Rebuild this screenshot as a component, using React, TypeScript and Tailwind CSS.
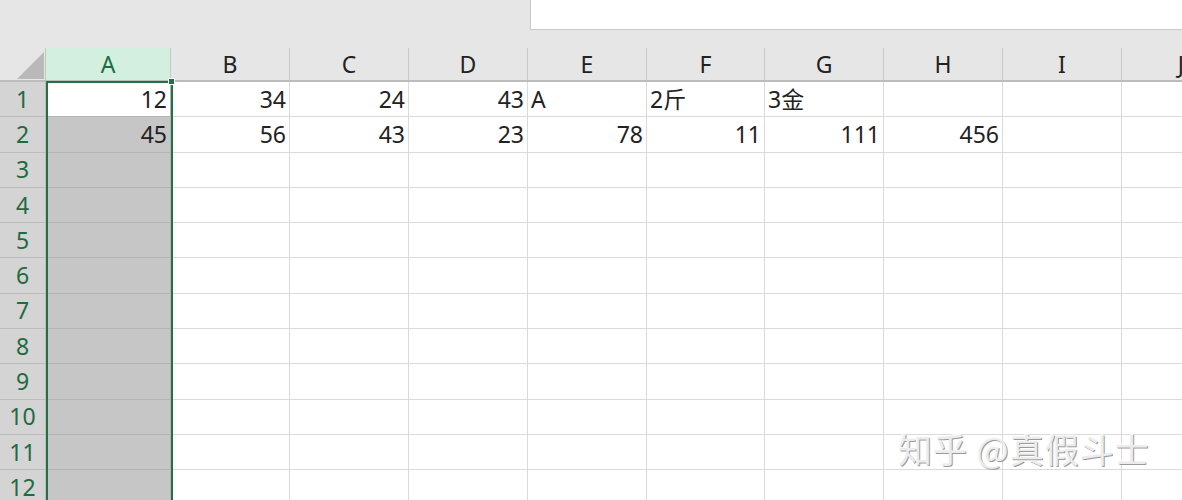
import React from "react";

const cols = ["A", "B", "C", "D", "E", "F", "G", "H", "I", "J"];
const widths = ["w-[125px]", "w-[119px]", "w-[119px]", "w-[119px]", "w-[119px]", "w-[118px]", "w-[119px]", "w-[119px]", "w-[119px]", "w-[119px]"];

type Cell = { v: string; left?: boolean };

const data: Record<number, Cell[]> = {
  1: [
    { v: "12" },
    { v: "34" },
    { v: "24" },
    { v: "43" },
    { v: "A", left: true },
    { v: "2斤", left: true },
    { v: "3金", left: true },
  ],
  2: [
    { v: "45" },
    { v: "56" },
    { v: "43" },
    { v: "23" },
    { v: "78" },
    { v: "11" },
    { v: "111" },
    { v: "456" },
  ],
};

export default function App() {
  const rows = Array.from({ length: 12 }, (_, i) => i + 1);

  return (
    <div className="relative h-[500px] w-[1182px] overflow-hidden bg-white font-['Noto_Sans','Noto_Sans_CJK_SC',sans-serif] text-[23px] text-[#222]">
      {/* top strip */}
      <div className="flex h-[48px] bg-[#e6e6e6]">
        <div className="w-[530px] shrink-0" />
        <div className="h-[30px] flex-1 border-b border-l border-[#c9c9c9] bg-white" />
      </div>

      {/* column headers */}
      <div className="flex h-[34px] border-b-2 border-[#bcbcbc] bg-[#e6e6e6]">
        <div className="relative w-[46px] shrink-0 border-r border-[#c4c4c4]">
          <svg className="absolute left-[17px] top-[4px]" width="27" height="27" viewBox="0 0 27 27">
            <polygon points="27,0 27,27 0,27" fill="#b9b9b9" />
          </svg>
        </div>
        {cols.map((c, i) => (
          <div
            key={c}
            className={`${widths[i]} flex shrink-0 items-center justify-center border-r border-[#c8c8c8] leading-none ${
              i === 0 ? "bg-[#d3efdf] text-[#1e6b43]" : "text-[#222]"
            }`}
          >
            {c}
          </div>
        ))}
      </div>

      {/* rows */}
      {rows.map((r) => (
        <div key={r} className="flex h-[35.3px]">
          <div className="flex w-[46px] shrink-0 items-center justify-center border-b border-r border-[#bdbdbd] bg-[#d4d4d4] leading-none text-[#1e6b43]">
            {r}
          </div>
          {cols.map((c, i) => {
            const cell = data[r]?.[i];
            const colA = i === 0;
            const bg = colA ? (r === 1 ? "bg-white" : "bg-[#c6c6c6]") : "bg-white";
            const line = colA ? "border-[#b4b4b4]" : "border-[#dadada]";
            return (
              <div
                key={c}
                className={`${widths[i]} ${bg} ${line} flex shrink-0 items-center border-b border-r px-[3px] leading-none ${
                  cell?.left ? "justify-start" : "justify-end"
                }`}
              >
                {cell?.v}
              </div>
            );
          })}
        </div>
      ))}

      {/* selection outline on column A */}
      <div className="absolute left-[46px] top-[81px] h-[430px] w-[127px] border-2 border-[#217346]" />
      <div className="absolute left-[168px] top-[78px] h-[7px] w-[7px] border border-white bg-[#217346]" />

      {/* watermark */}
      <div className="absolute left-[898px] top-[432px] font-['Noto_Sans_CJK_SC',sans-serif] text-[34px] leading-none tracking-[1px] text-[#ececec] [text-shadow:1px_1px_0_#9a9a9a,-1px_-1px_0_#ffffff]">
        知乎 @真假斗士
      </div>
    </div>
  );
}
